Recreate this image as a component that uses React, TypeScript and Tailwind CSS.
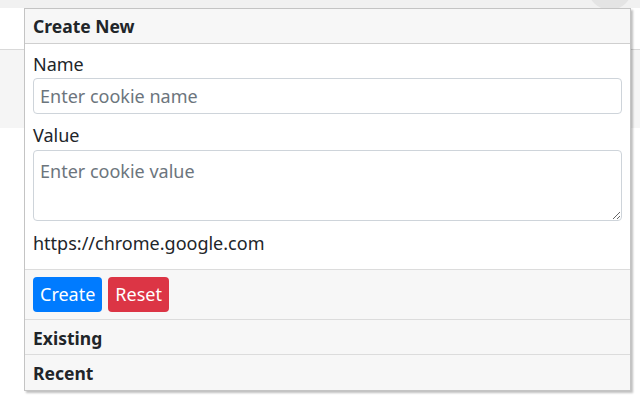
export default function App() {
  return (
    <div
      className="relative w-[640px] h-[400px] overflow-hidden bg-white text-[#212529]"
      style={{ fontFamily: '"Noto Sans", "Open Sans", sans-serif' }}
    >
      {/* page behind the popup */}
      <div className="h-[8px] bg-[#f1f1f1]" />
      <div className="h-[42px] bg-white border-b border-[#d9d9d9]" />
      <div className="h-[78px] bg-[#f5f5f5]" />
      <div className="absolute right-[8px] top-[-34px] w-[44px] h-[44px] rounded-full bg-[#e4e4e4]" />

      {/* popup */}
      <div className="absolute left-[24px] top-[8px] w-[607px] h-[383px] flex flex-col bg-white border border-[#c4c4c4] shadow-[2px_2px_2px_rgba(0,0,0,0.25)]">
        <div className="h-[35px] shrink-0 flex items-center px-2 bg-[#f7f7f7] border-b border-[#cfcfcf] text-[17.5px] font-bold">
          Create New
        </div>
        <div className="flex flex-col px-2 pt-2 pb-[14px] text-[18px]">
          <label className="leading-[24px] mb-[2px]">Name</label>
          <input
            className="h-[36px] px-[6px] border border-[#ced4da] rounded-[4px] text-[18px] placeholder:text-[#6c757d] outline-none"
            placeholder="Enter cookie name"
          />
          <label className="leading-[24px] mt-[9px] mb-[3px]">Value</label>
          <textarea
            className="h-[71px] px-[6px] pt-[8px] pb-[6px] border border-[#ced4da] rounded-[4px] text-[18px] leading-[24px] placeholder:text-[#6c757d] outline-none resize-y"
            placeholder="Enter cookie value"
          />
          <div className="leading-[24px] mt-[10px]">https://chrome.google.com</div>
        </div>
        <div className="h-[50px] shrink-0 flex items-center gap-[6px] px-2 bg-[#f7f7f7] border-t border-[#dcdcdc]">
          <button className="h-[35px] px-[7px] rounded-[4px] bg-[#007bff] text-white text-[18px]">Create</button>
          <button className="h-[35px] px-[7px] rounded-[4px] bg-[#dc3545] text-white text-[18px]">Reset</button>
        </div>
        <div className="h-[35px] shrink-0 flex items-center pt-[2px] px-2 bg-[#f7f7f7] border-t border-[#dcdcdc] text-[17.5px] font-bold">
          Existing
        </div>
        <div className="flex-1 flex items-center pt-[2px] px-2 bg-[#f7f7f7] border-t border-[#dcdcdc] text-[17.5px] font-bold">
          Recent
        </div>
      </div>
    </div>
  );
}
